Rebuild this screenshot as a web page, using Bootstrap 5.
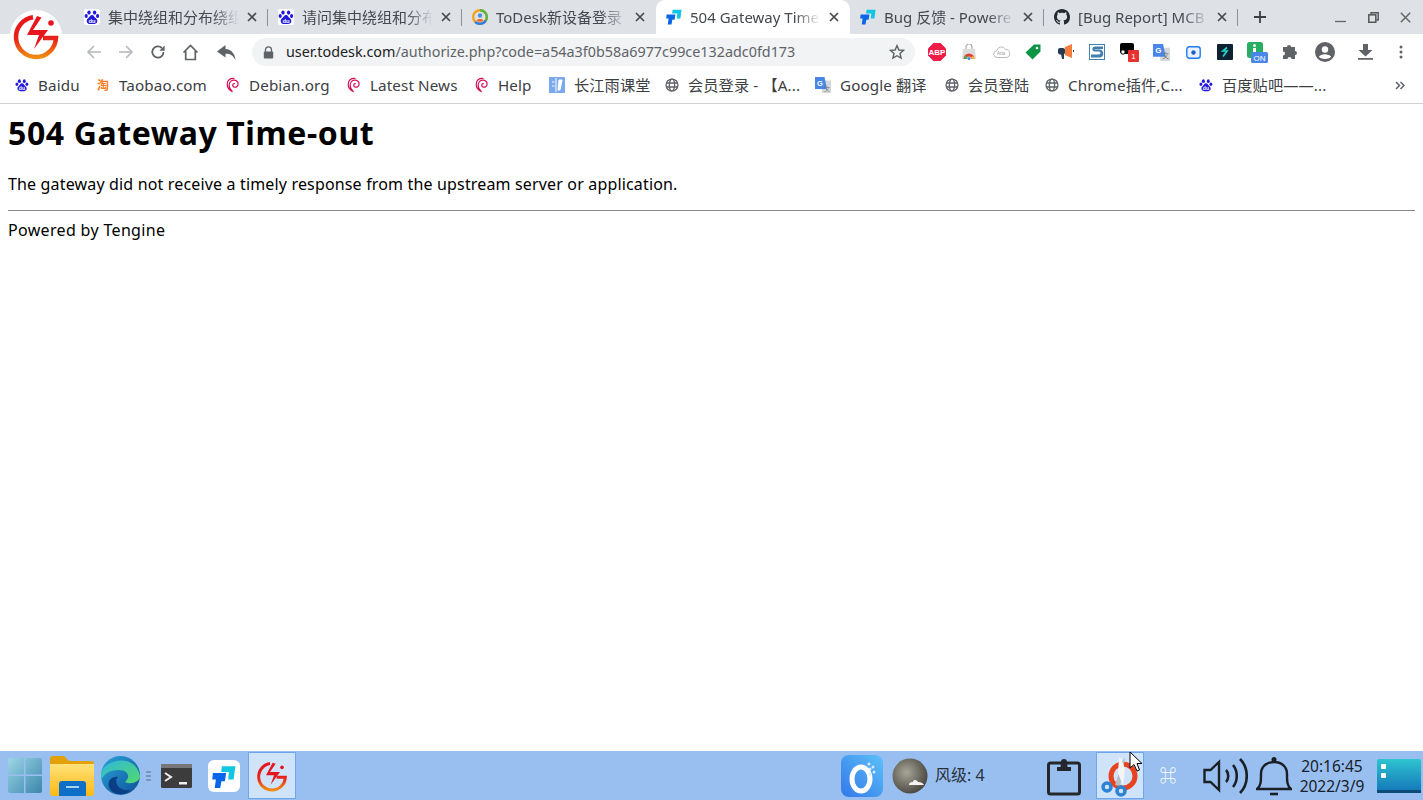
<!DOCTYPE html>
<html lang="zh">
<head>
<meta charset="utf-8">
<title>504 Gateway Time-out</title>
<link href="https://cdn.jsdelivr.net/npm/bootstrap@5.3.0/dist/css/bootstrap.min.css" rel="stylesheet">
<style>
html,body{height:100%;overflow:hidden}
body{font-family:"Noto Sans","Noto Sans CJK SC",sans-serif;font-size:16px;line-height:1.36;color:#000;background:#fff}
.screen{width:1423px;height:800px;position:relative}
.chrome-ui{font-family:"Noto Sans","Noto Sans CJK SC",sans-serif;color:#3c4043}
.tabstrip{height:34px;background:#dee1e6;padding-left:74px}
.tabx{width:194px;height:34px;padding:0 8px 0 10px;position:relative;font-size:15px}
.tabx.on{background:#fff;border-radius:9px 9px 0 0;color:#3c4043}
.tabx.sep::after{content:"";position:absolute;right:0;top:9px;height:17px;width:1px;background:#8d9095}
.tabtitle{flex:1 1 0;min-width:0;margin:0 5px 0 8px;white-space:nowrap;overflow:hidden;color:#45494e;-webkit-mask-image:linear-gradient(90deg,#000 80%,transparent 100%);mask-image:linear-gradient(90deg,#000 80%,transparent 100%)}
.tabclose{width:16px;height:16px;flex:none}
.newtab{margin-left:14px}
.winbtns{margin-left:auto;width:88px;padding-right:12px}
.toolbar{height:36px;padding-left:78px;background:#fff}
.toolbtn{width:32px;height:32px;flex:none}
.omni{width:663px;height:28px;margin-left:10px;background:#f1f3f4;border-radius:14px;padding:0 10px 0 11px;font-size:14.35px;color:#5f6368;white-space:nowrap}
.omni b{font-weight:400;color:#202124}
.omni .urltxt{margin-left:12px;flex:1 1 0}
.exts{margin-left:6px}
.extbtn{width:32px;height:32px;position:relative;flex:none}
.bookbar{height:34px;padding:0 0 3px 15px;font-size:15.2px;letter-spacing:.12px;border-bottom:1px solid #d0d1d3;white-space:nowrap;color:#3c4043}
.bk{flex:none}
.bk svg{margin-right:9px;flex:none}
.moreb{position:absolute;left:1394px;top:79px}
.pagebody{height:646px;padding:7px 8px 8px}
.pagebody h1{font-size:32px;font-weight:700;line-height:44px;margin:0 0 18px;color:#000;letter-spacing:.6px}
.pagebody p{margin:0 0 15px;line-height:22px;letter-spacing:.16px}
.pagebody hr{margin:0 0 9px;border:0;border-top:1px solid #8a8a8a;opacity:1}
.pagefoot{letter-spacing:.33px}
.taskbar{height:49px;background:#99bff0;color:#1f2a36}
.tslot{flex:none}
.active-slot{background:#cfe3fb;border:1px solid #6ea6ea;width:48px;height:47px}
.windtext{font-size:16px;width:54px;color:#27313c;white-space:nowrap}
.clockbox{font-size:15.5px;line-height:20px;text-align:center;color:#17202a;width:76px}
.cmdkey{color:#fff;font-size:17px;width:50px;text-align:center;line-height:1}
.applogo{position:absolute;left:6px;top:6px}
.cursorx{position:absolute;left:1129px;top:752px}
</style>
</head>
<body>
<svg width="0" height="0" class="d-block position-absolute">
<defs>
<linearGradient id="lg" x1="0" y1="0" x2="0" y2="1"><stop offset="0" stop-color="#e7141c"/><stop offset=".55" stop-color="#e7231a"/><stop offset="1" stop-color="#f08c10"/></linearGradient>
<linearGradient id="tealg" x1="0" y1="0" x2="1" y2="1"><stop offset="0" stop-color="#9ed6e6"/><stop offset="1" stop-color="#3a86ad"/></linearGradient>
<linearGradient id="edgeg" x1="0" y1="0" x2="1" y2="1"><stop offset="0" stop-color="#2aa6d8"/><stop offset="1" stop-color="#0c4f9a"/></linearGradient>
<linearGradient id="edgeg2" x1="0" y1="0" x2="1" y2="1"><stop offset="0" stop-color="#30b8e0"/><stop offset="1" stop-color="#52d96a"/></linearGradient>
<linearGradient id="folderg" x1="0" y1="0" x2="0" y2="1"><stop offset="0" stop-color="#ffe27a"/><stop offset="1" stop-color="#fdb813"/></linearGradient>
<linearGradient id="appg" x1="1" y1="0" x2="0" y2="1"><stop offset="0" stop-color="#5cc0f8"/><stop offset="1" stop-color="#3278ea"/></linearGradient>
<linearGradient id="deskg" x1="0" y1="0" x2="0" y2="1"><stop offset="0" stop-color="#2fc4d0"/><stop offset="1" stop-color="#1274b8"/></linearGradient>
<radialGradient id="moong" cx=".4" cy=".4" r=".7"><stop offset="0" stop-color="#a8a698"/><stop offset="1" stop-color="#3f3d36"/></radialGradient>
<symbol id="logo" viewBox="0 0 60 60">
<path d="M27 11.300A20 20 0 1 0 50 32H37" fill="none" stroke="url(#lg)" stroke-width="4.500"/>
<path d="M31 10 35.500 11.500 27 24H42L28 43 33 29H21Z" fill="#e7161c"/>
<circle cx="45" cy="17" r="2.800" fill="#e7161c"/>
</symbol>
<symbol id="baidu" viewBox="0 0 16 16">
<rect width="16" height="16" rx="2" fill="#fff"/>
<ellipse cx="5" cy="3.600" rx="1.700" ry="2.100" fill="#2319dc"/><ellipse cx="10.600" cy="3.600" rx="1.700" ry="2.100" fill="#2319dc"/>
<ellipse cx="2.200" cy="7" rx="1.600" ry="2" fill="#2319dc"/><ellipse cx="13.600" cy="7" rx="1.600" ry="2" fill="#2319dc"/>
<path d="M8 6c-2 0-2.200 2-3.600 3C3 10 2.600 11 2.800 12.400 3 14 4.400 15 6 15h4c1.800 0 3.200-1 3.300-2.800.1-1.200-.5-2.200-1.700-3.100C10.200 8 10 6 8 6Z" fill="#2319dc"/>
<text x="8" y="13.600" font-size="5.800" font-weight="700" text-anchor="middle" fill="#fff" font-family="Liberation Sans,sans-serif">du</text>
</symbol>
<symbol id="todesk" viewBox="0 0 16 16">
<path d="M.6 5.400H9.400L8.600 10.800H6.300L5.500 15.400H1.800L2.600 9.600H.2Z" fill="#0a66e8"/>
<path d="M6.600 .8H15.600L14.400 9.600H10.800L11.300 4.600H6.100Z" fill="#11c6e0"/>
</symbol>
<symbol id="todesktab" viewBox="0 0 16 16">
<circle cx="8" cy="8" r="6.800" fill="none" stroke="#f4a21c" stroke-width="2.400"/>
<path d="M8 1.200A6.800 6.800 0 0 1 13.900 11.400" fill="none" stroke="#58b947" stroke-width="2.400"/>
<path d="M13.900 11.400A6.800 6.800 0 0 1 3.200 12.800" fill="none" stroke="#2f7ee8" stroke-width="2.400"/>
<circle cx="8" cy="6.500" r="2.200" fill="#4a90e2"/><path d="M4.400 11.800c.8-2.400 6.400-2.400 7.200 0-2.200 1.200-5 1.200-7.200 0Z" fill="#f26522"/>
</symbol>
<symbol id="github" viewBox="0 0 16 16"><path fill="#24292f" d="M8 0C3.580 0 0 3.580 0 8c0 3.540 2.290 6.530 5.470 7.590.4.070.55-.17.55-.38 0-.19-.01-.82-.01-1.490-2.010.37-2.530-.49-2.690-.94-.09-.23-.48-.94-.82-1.130-.28-.15-.68-.52-.01-.53.63-.01 1.080.58 1.230.82.72 1.210 1.870.87 2.330.66.07-.52.28-.87.51-1.070-1.780-.2-3.640-.89-3.640-3.950 0-.87.31-1.590.82-2.150-.08-.2-.36-1.020.08-2.120 0 0 .67-.21 2.200.82.64-.18 1.320-.27 2-.27.68 0 1.360.09 2 .27 1.530-1.040 2.200-.82 2.200-.82.44 1.100.16 1.920.08 2.120.51.56.82 1.270.82 2.150 0 3.070-1.870 3.750-3.650 3.950.29.25.54.73.54 1.480 0 1.070-.01 1.930-.01 2.200 0 .21.15.46.55.38A8.013 8.013 0 0016 8c0-4.420-3.580-8-8-8z"/></symbol>
<symbol id="closex" viewBox="0 0 16 16"><path d="M4 4 12 12M12 4 4 12" stroke="#45494e" stroke-width="1.700" fill="none"/></symbol>
<symbol id="debian" viewBox="0 0 14 16"><path d="M8.500 1.500C4.500 .8 1.200 3.200 1.200 7.200c0 3.300 2 5.800 5.300 7.500C4.200 12.600 3 10.200 3.200 7.800 3.500 4.800 5.800 3 8.400 3.200c2.300.2 3.900 1.900 3.700 4-.2 1.900-1.800 3.200-3.500 3-1.300-.2-2.100-1.300-1.800-2.400.2-1 1.200-1.500 2-1.100" fill="none" stroke="#d70a53" stroke-width="1.200"/></symbol>
<symbol id="globe" viewBox="0 0 16 16"><g fill="none" stroke="#5f6368" stroke-width="1.500"><circle cx="8" cy="8" r="6.800"/><ellipse cx="8" cy="8" rx="3" ry="6.800"/><path d="M1.500 5.700H14.500M1.500 10.300H14.500"/></g></symbol>
<symbol id="gtrans" viewBox="0 0 16 16"><path d="M6 3.500H16V16H7Z" fill="#d5d7da"/><path d="M0 0H9.500L12 12H0Z" fill="#4a86e8"/><text x="5" y="8.500" font-size="7.500" font-weight="700" text-anchor="middle" fill="#fff" font-family="Liberation Sans,sans-serif">G</text><text x="12" y="13.500" font-size="6" text-anchor="middle" fill="#777" font-family="Noto Sans CJK SC,sans-serif">文</text></symbol>
</defs>
</svg>
<div class="screen d-flex flex-column">
  <div class="chrome-ui">
    <div class="tabstrip d-flex align-items-center">
      <div class="tabx sep d-flex align-items-center"><svg width="16" height="16"><use href="#baidu"/></svg><span class="tabtitle">集中绕组和分布绕组</span><svg class="tabclose"><use href="#closex"/></svg></div>
      <div class="tabx sep d-flex align-items-center"><svg width="16" height="16"><use href="#baidu"/></svg><span class="tabtitle">请问集中绕组和分布</span><svg class="tabclose"><use href="#closex"/></svg></div>
      <div class="tabx d-flex align-items-center"><svg width="16" height="16"><use href="#todesktab"/></svg><span class="tabtitle">ToDesk新设备登录</span><svg class="tabclose"><use href="#closex"/></svg></div>
      <div class="tabx on d-flex align-items-center"><svg width="16" height="16"><use href="#todesk"/></svg><span class="tabtitle">504 Gateway Time</span><svg class="tabclose"><use href="#closex"/></svg></div>
      <div class="tabx sep d-flex align-items-center"><svg width="16" height="16"><use href="#todesk"/></svg><span class="tabtitle">Bug 反馈 - Powere</span><svg class="tabclose"><use href="#closex"/></svg></div>
      <div class="tabx sep d-flex align-items-center"><svg width="16" height="16"><use href="#github"/></svg><span class="tabtitle">[Bug Report] MCB</span><svg class="tabclose"><use href="#closex"/></svg></div>
      <svg class="newtab" width="16" height="16" viewBox="0 0 16 16"><path d="M8 2V14M2 8H14" stroke="#3c4043" stroke-width="1.800"/></svg>
      <div class="winbtns d-flex align-items-center justify-content-between">
        <svg width="11" height="11" viewBox="0 0 11 11"><path d="M0 9.500H11" stroke="#666" stroke-width="1.300"/></svg>
        <svg width="11" height="11" viewBox="0 0 11 11"><path d="M3 2.500V.8H10.200V8H8.300" fill="none" stroke="#555" stroke-width="1.400"/><rect x=".8" y="2.800" width="7" height="7.500" fill="none" stroke="#555" stroke-width="1.500"/></svg>
        <svg width="11" height="11" viewBox="0 0 11 11"><path d="M.8.800 10.200 10.200M10.200.800.800 10.200" stroke="#666" stroke-width="1.500"/></svg>
      </div>
    </div>
    <div class="toolbar d-flex align-items-center">
      <div class="toolbtn d-flex align-items-center justify-content-center"><svg width="16" height="16" viewBox="0 0 16 16"><path d="M15 8H2M8 2 2 8l6 6" fill="none" stroke="#b5b7ba" stroke-width="1.600"/></svg></div>
      <div class="toolbtn d-flex align-items-center justify-content-center"><svg width="16" height="16" viewBox="0 0 16 16"><path d="M1 8H14M8 2l6 6-6 6" fill="none" stroke="#b5b7ba" stroke-width="1.600"/></svg></div>
      <div class="toolbtn d-flex align-items-center justify-content-center"><svg width="16" height="16" viewBox="0 0 16 16"><path d="M13.500 8A5.600 5.600 0 1 1 11.800 4" fill="none" stroke="#5f6368" stroke-width="1.800"/><path d="M14.600 1.500V6.800H9.300Z" fill="#5f6368"/></svg></div>
      <div class="toolbtn d-flex align-items-center justify-content-center"><svg width="17" height="17" viewBox="0 0 17 17"><path d="M1.500 8.500 8.500 1.500l7 7M3.700 7V15.500H13.300V7" fill="none" stroke="#5f6368" stroke-width="1.700"/></svg></div>
      <div class="toolbtn d-flex align-items-center justify-content-center ms-1"><svg width="19" height="15" viewBox="0 0 19 15"><path d="M8.500 0 0 6.500 8.500 12.500V8.800C13 8.600 16 10.500 18.500 15 18 9 14.500 4.500 8.500 4Z" fill="#5f6368"/></svg></div>
      <div class="omni d-flex align-items-center">
        <svg width="11" height="13" viewBox="0 0 11 13"><path d="M2.500 6V3.800a3 3 0 0 1 6 0V6" fill="none" stroke="#5f6368" stroke-width="1.300"/><rect y="5.500" x=".8" width="9.400" height="7" rx="1" fill="#5f6368"/></svg>
        <span class="urltxt"><b>user.todesk.com</b>/authorize.php?code=a54a3f0b58a6977c99ce132adc0fd173</span>
        <svg width="16" height="16" viewBox="0 0 16 16"><path d="M8 1.600 9.900 6l4.700.4-3.600 3.100 1.100 4.600L8 11.700 3.900 14.100 5 9.500 1.400 6.400 6.100 6Z" fill="none" stroke="#5f6368" stroke-width="1.400"/></svg>
      </div>
      <div class="exts d-flex align-items-center">
        <div class="extbtn d-flex align-items-center justify-content-center"><svg width="18" height="18" viewBox="0 0 18 18"><path d="M5.500 0H12.500L18 5.500V12.500L12.500 18H5.500L0 12.500V5.500Z" fill="#ee1c46"/><text x="9" y="12" font-size="8" font-weight="700" text-anchor="middle" fill="#fff" font-family="Liberation Sans,sans-serif">ABP</text></svg></div>
        <div class="extbtn d-flex align-items-center justify-content-center"><svg width="16" height="16" viewBox="0 0 16 16"><path d="M2 5H14L15 15H1Z" fill="#dcdcdc"/><path d="M5 5V3a3 3 0 0 1 6 0V5" fill="none" stroke="#aaa" stroke-width="1.200"/><path d="M2.500 15a5.500 5.500 0 0 1 11 0H10.500a2.500 2.500 0 0 0-5 0Z" fill="#e34234"/><path d="M2.500 15h3l1-1.500L4 11Z" fill="#4caf50"/><path d="M10.500 15H13.500L12.500 12l-2 1Z" fill="#fbc02d"/><circle cx="8" cy="14.500" r="1.500" fill="#4a86e8"/></svg></div>
        <div class="extbtn d-flex align-items-center justify-content-center"><svg width="17" height="12" viewBox="0 0 17 12"><path d="M4.500 11.500a3.500 3.500 0 0 1-.5-7A4.500 4.500 0 0 1 12.500 3.500 4 4 0 0 1 13 11.500Z" fill="#fff" stroke="#b8babc"/><text x="8" y="9.300" font-size="4.500" text-anchor="middle" fill="#999" font-family="Liberation Sans,sans-serif">Aria</text></svg></div>
        <div class="extbtn d-flex align-items-center justify-content-center"><svg width="16" height="16" viewBox="0 0 16 16"><path d="M9 .5 15.500.5V7.500L7.500 15.500.5 8.500Z" fill="#0b9444"/><circle cx="12" cy="4" r="1.300" fill="#fff"/></svg></div>
        <div class="extbtn d-flex align-items-center justify-content-center"><svg width="17" height="16" viewBox="0 0 17 16"><path d="M8 3 15 0V14L8 11Z" fill="#f47c3c"/><rect x="1" y="4" width="7" height="6.500" rx="2" fill="#243b53"/><path d="M4 10H7V15H5Z" fill="#243b53"/><rect x="16" y="6" width="1" height="2" fill="#243b53"/></svg></div>
        <div class="extbtn d-flex align-items-center justify-content-center"><svg width="16" height="16" viewBox="0 0 16 16"><rect x=".5" y=".5" width="15" height="15" fill="#fff" stroke="#3f7fb0"/><path d="M14 2.500H6C2.500 2.500 2.500 7.500 6 7.500H10C12 7.500 12 10.500 10 10.500H2V13.500H10.500C15.500 13.500 15.500 5.500 10.500 5.500H6.500C5.500 5.500 5.500 5 6.500 5H14Z" fill="#3f7fb0"/></svg></div>
        <div class="extbtn d-flex align-items-center justify-content-center"><svg width="20" height="20" viewBox="0 0 20 20"><path d="M1 3a2 2 0 0 1 2-2H13a2 2 0 0 1 2 2V12H4a3 3 0 0 1-3-3Z" fill="#000"/><circle cx="4" cy="10" r="2.200" fill="#fff" stroke="#000"/><rect x="9" y="8" width="11" height="12" rx="1" fill="#e8312f"/><text x="14.500" y="17" font-size="8" text-anchor="middle" fill="#fff" font-family="Liberation Sans,sans-serif">1</text></svg></div>
        <div class="extbtn d-flex align-items-center justify-content-center"><svg width="17" height="17"><use href="#gtrans"/></svg></div>
        <div class="extbtn d-flex align-items-center justify-content-center"><svg width="15" height="13" viewBox="0 0 15 13"><rect x=".8" y=".8" width="13.400" height="11.400" rx="2.500" fill="#e9f2fe" stroke="#1f7cf0" stroke-width="1.400"/><circle cx="7.500" cy="6.500" r="2.200" fill="#1f5fd0"/></svg></div>
        <div class="extbtn d-flex align-items-center justify-content-center"><svg width="16" height="16" viewBox="0 0 16 16"><rect width="16" height="16" rx="1" fill="#0f2233"/><path d="M10 3.500 6 7h4L6 12.500" fill="none" stroke="#22d3c5" stroke-width="1.700"/></svg></div>
        <div class="extbtn d-flex align-items-center justify-content-center"><svg width="22" height="22" viewBox="0 0 22 22"><rect x="1" y="1" width="16" height="16" rx="2.500" fill="#27ae60"/><circle cx="8.500" cy="4.500" r="1.500" fill="#fff"/><rect x="7" y="7" width="3" height="7" fill="#fff"/><rect x="5" y="11" width="17" height="11" rx="1.500" fill="#4a86e8"/><text x="13.500" y="19.500" font-size="8" text-anchor="middle" fill="#fff" font-family="Liberation Sans,sans-serif">ON</text></svg></div>
        <div class="extbtn d-flex align-items-center justify-content-center"><svg width="15" height="15" viewBox="0 0 15 15"><path d="M5 2a2 2 0 0 1 4 0H13V6a2 2 0 0 1 0 4V14H9.500a2 2 0 0 0-4 0H1V10.500a2 2 0 0 0 0-4V2Z" fill="#5f6368"/></svg></div>
        <div class="extbtn ms-1 d-flex align-items-center justify-content-center"><svg width="20" height="20" viewBox="0 0 20 20"><circle cx="10" cy="10" r="10" fill="#5f6368"/><circle cx="10" cy="7.500" r="3.200" fill="#fff"/><path d="M3.800 14.800c2-3.400 10.400-3.400 12.400 0-3 3-9.400 3-12.400 0Z" fill="#fff"/></svg></div>
        <div class="extbtn ms-2 d-flex align-items-center justify-content-center"><svg width="15" height="16" viewBox="0 0 15 16"><path d="M5 0H10V6H14.500L7.500 12.500.5 6H5ZM0 14H15V15.800H0Z" fill="#5f6368"/></svg></div>
        <div class="extbtn ms-1 d-flex align-items-center justify-content-center"><svg width="4" height="14" viewBox="0 0 4 14"><circle cx="2" cy="2" r="1.500" fill="#5f6368"/><circle cx="2" cy="7" r="1.500" fill="#5f6368"/><circle cx="2" cy="12" r="1.500" fill="#5f6368"/></svg></div>
      </div>
    </div>
    <div class="bookbar d-flex align-items-center">
      <div class="bk d-flex align-items-center" style="width:81px"><svg width="14" height="14"><use href="#baidu"/></svg>Baidu</div>
      <div class="bk d-flex align-items-center" style="width:130px"><svg width="14" height="14" viewBox="0 0 14 14"><text x="7" y="11.500" font-size="12" font-weight="700" text-anchor="middle" fill="#ff7a1a" font-family="Noto Sans CJK SC,sans-serif">淘</text></svg>Taobao.com</div>
      <div class="bk d-flex align-items-center" style="width:121px"><svg width="14" height="16"><use href="#debian"/></svg>Debian.org</div>
      <div class="bk d-flex align-items-center" style="width:128px"><svg width="14" height="16"><use href="#debian"/></svg>Latest News</div>
      <div class="bk d-flex align-items-center" style="width:74px"><svg width="14" height="16"><use href="#debian"/></svg>Help</div>
      <div class="bk d-flex align-items-center" style="width:116px"><svg width="16" height="16" viewBox="0 0 16 16"><rect width="16" height="16" fill="#7aa9ee"/><path d="M7 1V15M3 5H5.500M3 9H5.500M10 3 13 3 11 13H9Z" stroke="#fff" stroke-width="1" fill="#fff"/></svg>长江雨课堂</div>
      <div class="bk d-flex align-items-center" style="width:150px"><svg width="14" height="14"><use href="#globe"/></svg>会员登录 - 【A...</div>
      <div class="bk d-flex align-items-center" style="width:130px"><svg width="16" height="16"><use href="#gtrans"/></svg>Google 翻译</div>
      <div class="bk d-flex align-items-center" style="width:100px"><svg width="14" height="14"><use href="#globe"/></svg>会员登陆</div>
      <div class="bk d-flex align-items-center" style="width:154px"><svg width="14" height="14"><use href="#globe"/></svg>Chrome插件,C...</div>
      <div class="bk d-flex align-items-center"><svg width="14" height="14"><use href="#baidu"/></svg>百度贴吧——...</div>
    </div>
  </div>
  <div class="pagebody flex-grow-1">
    <h1>504 Gateway Time-out</h1>
    <p>The gateway did not receive a timely response from the upstream server or application.</p>
    <hr>
    <div class="pagefoot">Powered by Tengine</div>
  </div>
  <div class="taskbar d-flex align-items-center">
    <div class="tslot ms-2 me-2"><svg width="34" height="35" viewBox="0 0 34 35" class="d-block"><path d="M0 2a2 2 0 0 1 2-2H16V16.500H0ZM17.500 0H32a2 2 0 0 1 2 2V16.500H17.500ZM0 18H16V35H2a2 2 0 0 1-2-2ZM17.500 18H34V33a2 2 0 0 1-2 2H17.500Z" fill="url(#tealg)"/></svg></div>
    <div class="tslot"><svg width="44" height="40" viewBox="0 0 44 40" class="d-block"><path d="M0 3a3 3 0 0 1 3-3H14l5 5H41a3 3 0 0 1 3 3V12H0Z" fill="#e3a008"/><path d="M0 8H44V37a3 3 0 0 1-3 3H3a3 3 0 0 1-3-3Z" fill="url(#folderg)"/><path d="M9 28a3 3 0 0 1 3-3H33a3 3 0 0 1 3 3V40H9Z" fill="#0f6fc6"/><rect x="16" y="30" width="13" height="2" fill="#9fd4f5"/></svg></div>
    <div class="tslot" style="margin-left:7px"><svg width="39" height="39" viewBox="0 0 39 39" class="d-block"><circle cx="19.500" cy="19.500" r="19.500" fill="url(#edgeg)"/><path d="M0 17C3 4 34 -4 39 20 39 26 30 29 24 26 30 21 27 14 18 14 8 14 3 18 0 24Z" fill="url(#edgeg2)"/><path d="M17 21C12 26 18 36 30 34 25 40 11 40 8 31 6 24 12 20 17 21Z" fill="#0b3f85"/></svg></div>
    <div class="tslot" style="margin-left:6px"><svg width="5" height="10" viewBox="0 0 5 10" class="d-block"><path d="M0 1H5M0 5H5M0 9H5" stroke="#5b6c80"/></svg></div>
    <div class="tslot" style="margin-left:10px"><svg width="31" height="24" viewBox="0 0 31 24" class="d-block"><rect width="31" height="24" rx="1.500" fill="#3c3c3c"/><rect width="31" height="4" fill="#777"/><path d="M4 9 10 13 4 17" fill="none" stroke="#eee" stroke-width="2"/><rect x="18" y="18" width="8" height="2.500" fill="#eee"/></svg></div>
    <div class="tslot" style="margin-left:16px"><svg width="32" height="32" viewBox="0 0 32 32" class="d-block"><rect width="32" height="32" rx="6" fill="#fff"/><g transform="translate(4 5) scale(1.500)"><path d="M.6 5.400H9.400L8.600 10.800H6.300L5.500 15.400H1.800L2.600 9.600H.2Z" fill="#0a66e8"/><path d="M6.600 .8H15.600L14.400 9.600H10.800L11.300 4.600H6.100Z" fill="#11c6e0"/></g></svg></div>
    <div class="tslot active-slot d-flex align-items-center justify-content-center" style="margin-left:8px"><svg width="40" height="40"><use href="#logo"/></svg></div>
    <div class="tslot d-flex align-items-center" style="margin-left:545px">
      <svg width="42" height="42" viewBox="0 0 42 42" class="d-block"><rect width="42" height="42" rx="8" fill="url(#appg)"/><ellipse cx="20" cy="24" rx="9" ry="12" fill="none" stroke="#fff" stroke-width="5"/><g fill="#dbe9fb"><circle cx="28" cy="9" r="1.500"/><circle cx="32" cy="12" r="1.500"/><circle cx="29" cy="14" r="1.500"/><circle cx="33" cy="17" r="1.500"/><circle cx="29" cy="19" r="1.500"/></g></svg>
    </div>
    <div class="tslot" style="margin-left:9px"><svg width="36" height="36" viewBox="0 0 36 36" class="d-block"><circle cx="18" cy="18" r="17.500" fill="url(#moong)"/><path d="M17 27c0-3 3-3 4-3 .5-3 4-2 5 0 3 0 5 1 6 3Z" fill="#f4f4f4"/></svg></div>
    <div class="tslot windtext" style="margin-left:7px">风级: 4</div>
    <div class="tslot" style="margin-left:58px"><svg width="34" height="40" viewBox="0 0 34 40" class="d-block"><rect x="1.500" y="7" width="31" height="31" rx="2" fill="none" stroke="#24282d" stroke-width="3"/><path d="M10 15V11H13.500L14 6a3 3 0 1 1 6 0l.5 5H24V15Z" fill="#24282d"/></svg></div>
    <div class="tslot active-slot d-flex align-items-center justify-content-center" style="margin-left:15px"><svg width="40" height="42" viewBox="0 0 40 42"><circle cx="23" cy="21" r="12" fill="none" stroke="#e8431f" stroke-width="5"/><path d="M24 3 15 30 20 31 25 4Z" fill="#b9bcc0"/><path d="M19 3 18 18 23 31 25 14 21 3Z" fill="#f2f4f6"/><g fill="#cfe3fb" stroke="#2b83d6" stroke-width="3.500"><circle cx="7" cy="32" r="4"/><circle cx="21" cy="36" r="4"/></g></svg></div>
    <div class="tslot cmdkey" style="margin-left:-1px">⌘</div>
    <div class="tslot" style="margin-left:10px"><svg width="45" height="38" viewBox="0 0 45 38" class="d-block"><path d="M1.500 13H7.500L16 5V33L7.500 25H1.500Z" fill="none" stroke="#1b2026" stroke-width="2.400"/><path d="M23 13c3 3 3 9 0 12M30 8c5 6 5 16 0 22M37 2c9 9 9 25 0 34" fill="none" stroke="#1b2026" stroke-width="2.600"/></svg></div>
    <div class="tslot" style="margin-left:8px"><svg width="36" height="42" viewBox="0 0 36 42" class="d-block"><path d="M1 34c4-3 4-8 4-15 0-7 5-12 13-12s13 5 13 12c0 7 0 12 4 15Z" fill="none" stroke="#1b2026" stroke-width="2.400"/><circle cx="18" cy="4.500" r="2.500" fill="#1b2026"/><path d="M14 39h8" stroke="#1b2026" stroke-width="2.600"/></svg></div>
    <div class="tslot clockbox" style="margin-left:2px">20:16:45<br>2022/3/9</div>
    <div class="tslot" style="margin-left:7px"><svg width="44" height="34" viewBox="0 0 44 34" class="d-block"><rect width="44" height="34" rx="2" fill="url(#deskg)"/><rect x="4" y="5" width="5" height="5" rx="1" fill="#fff"/><rect x="4" y="14" width="5" height="5" rx="1" fill="#fff"/><rect y="31" width="44" height="3" fill="#0b4d78"/></svg></div>
  </div>
  <svg class="applogo" width="60" height="60"><circle cx="30" cy="30" r="26" fill="#fff"/><use href="#logo" width="60" height="60"/></svg>
  <svg class="moreb" width="12" height="12" viewBox="0 0 12 12"><path d="M2 3 5.500 6.500 2 10M6.500 3 10 6.500 6.500 10" fill="none" stroke="#5f6368" stroke-width="1.500"/></svg>
  <svg class="cursorx" width="14" height="22" viewBox="0 0 14 22"><path d="M1 0V16L5 12.500 8 19 10.500 18 8 11.500H13Z" fill="#fff" stroke="#000"/></svg>
</div>
<script src="https://cdn.jsdelivr.net/npm/bootstrap@5.3.0/dist/js/bootstrap.bundle.min.js"></script>
</body>
</html>
